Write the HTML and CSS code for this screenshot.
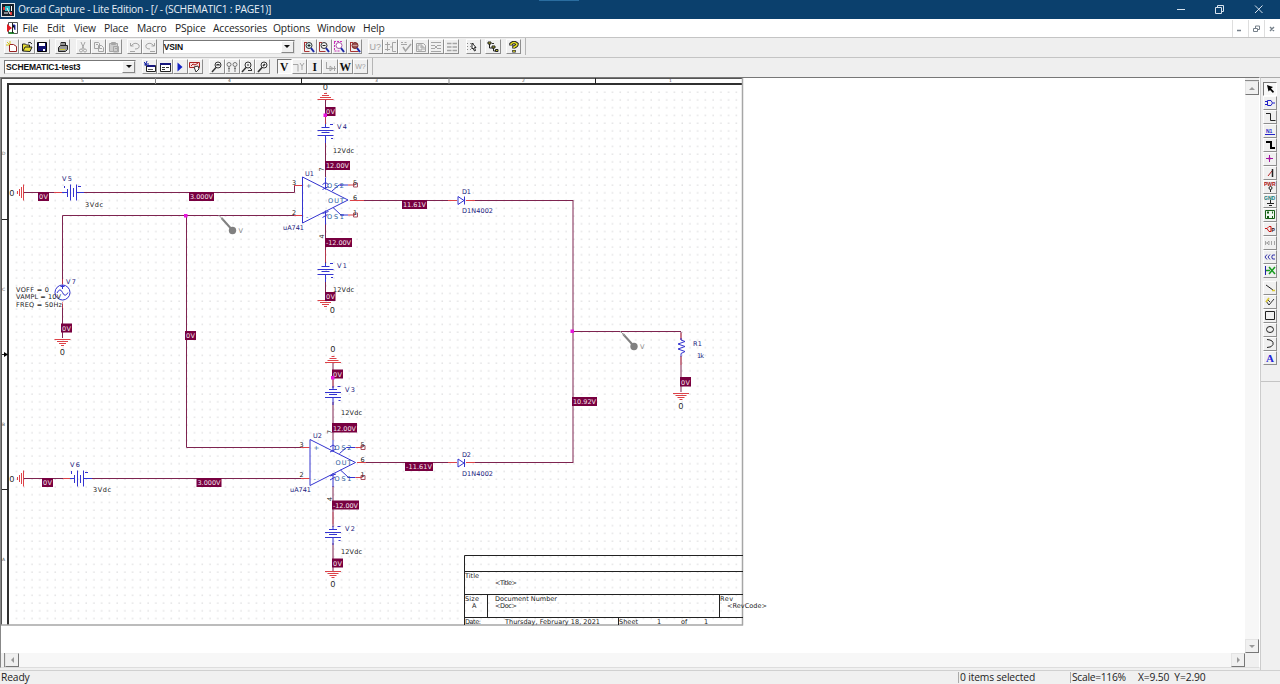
FILE: index.html
```html
<!DOCTYPE html>
<html lang="en">
<head>
<meta charset="utf-8">
<title>Orcad Capture - Lite Edition</title>
<link rel="stylesheet" href="styles.css">
</head>
<body>
<div class="app">
<header class="titlebar">
  <svg class="logo" width="14" height="14" viewBox="0 0 14 14"><path fill="#dfe5e8" d="M0 0h14v14H0z"/><path fill="#16202a" d="M1 1h12v12H1z"/><path fill="#29b9c4" d="M4 3h5v5H4z"/><path fill="#d33" d="M2 4h2v3H2zM9 9h2v3H9z"/><path stroke="#fff" fill="none" d="M3 10h4M10.500 3v5M6 5l3 6"/></svg>
  <span class="title-text">Orcad Capture - Lite Edition - [/ - (SCHEMATIC1 : PAGE1)]</span>
  <span class="title-accent"></span>
  <svg class="win-controls" width="120" height="19" viewBox="0 0 120 19"><path stroke="#d7e2ee" fill="none" d="M17 9.500h8M55.500 7.500h6v6h-6zM57.500 7v-1.500h6v6h-1.500M95 5.500l7.500 7.500M102.500 5.500l-7.500 7.500"/></svg>
</header>
<nav class="menubar">
  <svg class="doc-icon" width="12" height="14" viewBox="0 0 12 14"><path fill="#fff" stroke="#555" d="M2.500 1.500h9v11h-9z"/><path fill="#e31b23" d="M1 3l5 4-5 4z"/><path stroke="#2b36c9" d="M6 4h3v5"/><path stroke="#2c8b35" stroke-width="2" d="M3 12h5"/><path stroke="#222" d="M6.500 2v10"/></svg>
  <span class="m-file">File</span><span class="m-edit">Edit</span><span class="m-view">View</span><span class="m-place">Place</span><span class="m-macro">Macro</span><span class="m-pspice">PSpice</span><span class="m-acc">Accessories</span><span class="m-opt">Options</span><span class="m-win">Window</span><span class="m-help">Help</span>
  <svg class="mdi-controls" width="48" height="17" viewBox="0 0 48 17"><path stroke="#dedede" d="M.5 0v17M16.500 0v17M32.500 0v17"/><path stroke="#76808a" stroke-width="1.400" fill="none" d="M5 10.500h4M38 7l4 4M42 7l-4 4"/><path stroke="#76808a" fill="none" d="M21.500 8.500h4v3h-4zM23.500 8v-2h4v3.500h-2"/></svg>
</nav>

<div class="toolbar">
  <div class="group">
    <b class="btn"><svg viewBox="0 0 12 12"><path fill="#fff" stroke="#922" d="M3.500 3.500h4l3 2v5h-7z"/><path stroke="#d5c51a" d="M1 1l3 3M4 0v3M0 4h3"/></svg></b>
    <b class="btn"><svg viewBox="0 0 12 12"><path fill="#e8df35" stroke="#222" d="M1.500 10V3h3l1 1h3v2h2.500l-2 4.500z"/><path stroke="#222" fill="none" d="M2 10l2-4h5M7 2q2-2 4 1"/></svg></b>
    <b class="btn"><svg viewBox="0 0 12 12"><path fill="#121270" stroke="#000" d="M1.500 1.500h9v9h-9z"/><path fill="#fff" d="M3 2h6v3H3zM7 8h2v2H7z"/></svg></b>
  </div>
  <div class="group">
    <b class="btn"><svg viewBox="0 0 12 12"><path fill="#fff" stroke="#222" d="M4 5V1.500h4.500V5"/><path fill="#999" stroke="#222" d="M1.500 6.500l2-2h7v4l-2 2h-7z"/><path stroke="#cfca2f" d="M3 8.500h5"/><path stroke="#222" d="M5 3h3"/></svg></b>
  </div>
  <div class="group dim">
    <b class="btn"><svg viewBox="0 0 12 12"><path d="M4 1l3 7M8 1L5 8"/><circle cx="4" cy="9.500" r="1.500"/><circle cx="8" cy="9.500" r="1.500"/></svg></b>
    <b class="btn"><svg viewBox="0 0 12 12"><path d="M1.500 1.500h4l1 1v5h-5zM5.500 4.500h3l2 2v4h-5zM3 3.500h2M7 7.500h2"/></svg></b>
    <b class="btn"><svg viewBox="0 0 12 12"><path fill="#ccc" d="M1.500 2.500h8v8h-8z"/><path d="M3.500 1.500h4v2h-4zM5.500 5.500h5v5.500h-5zM7 7.500h2"/></svg></b>
  </div>
  <div class="group dim">
    <b class="btn"><svg viewBox="0 0 12 12"><path d="M1.500 2v3h3M2 5q4-5 8-1 1 4-4 4M1 10.500h5"/></svg></b>
    <b class="btn"><svg viewBox="0 0 12 12"><path d="M10.500 2v3h-3M10 5Q6 0 2 4q-1 4 4 4M6 10.500h5"/></svg></b>
  </div>
  <div class="combo part"><span>VSIN</span><i class="drop"></i></div>
  <div class="group zooms">
    <b class="btn"><svg viewBox="0 0 12 12"><path stroke="#a33" fill="none" d="M1.500 1v9.500h5M1 1.500h3"/><circle cx="6" cy="4.500" r="3" fill="#d8eef0" stroke="#333"/><path stroke="#222" d="M4.500 4.500h3M6 3v3"/><path stroke="#1a28a8" stroke-width="2" d="M8 7l3 4"/></svg></b>
    <b class="btn"><svg viewBox="0 0 12 12"><path stroke="#a33" fill="none" d="M1.500 1v9.500h6M1 1.500h3"/><circle cx="6" cy="4.500" r="3" fill="#eee" stroke="#333"/><path stroke="#222" d="M4.500 4.500h3"/><path stroke="#1a28a8" stroke-width="2" d="M8 7l3 4"/></svg></b>
    <b class="btn"><svg viewBox="0 0 12 12"><path stroke="#c3b" stroke-dasharray="2 1" fill="none" d="M1.500 1v9h6M1 .5h8"/><circle cx="6" cy="4.500" r="3" fill="#fff" stroke="#a5a"/><path stroke="#1a28a8" stroke-width="2" d="M8 7l3 4"/></svg></b>
    <b class="btn"><svg viewBox="0 0 12 12"><path stroke="#a33" fill="none" d="M1.500 1v9.500h8M1 1.500h3"/><circle cx="6" cy="4.500" r="3" fill="#c99" stroke="#722"/><path stroke="#611" d="M4 3h4M4 6h4"/><path stroke="#1a28a8" stroke-width="2" d="M8 7l3 4"/></svg></b>
  </div>
  <div class="group dim">
    <b class="btn"><em>U?</em></b>
    <b class="btn"><svg viewBox="0 0 12 12"><path d="M2.500 1v9M0 3.500h5M0 8.500h5M11 1.500H7.500v9H11M5 6h3"/></svg></b>
    <b class="btn"><svg viewBox="0 0 12 12"><path stroke-width="1.500" d="M3 6l2.500 4L11 3"/><path d="M1 1.500h2M4.500 1.500h2M1 3.500h6"/></svg></b>
    <b class="btn"><svg viewBox="0 0 12 12"><path d="M1.500 2.500h7l2 2v6h-9zM3 4v5h4V4zM5 6h4v3"/></svg></b>
    <b class="btn"><svg viewBox="0 0 12 12"><path d="M1 1.500h10M1 4.500h3M8 4.500h3M4 4l4 4M8 4L4 8M1 7.500h3M8 7.500h3M1 10.500h10"/></svg></b>
    <b class="btn"><svg viewBox="0 0 12 12"><path stroke-width="1.500" stroke-dasharray="4.500 1" d="M1 2.500h10M1 6h10M1 9.500h10"/></svg></b>
  </div>
  <div class="group snap"><b class="btn"><svg viewBox="0 0 12 12"><path stroke="#888" stroke-dasharray="1 2" d="M0 2.500h9M0 5.500h9M0 8.500h9"/><path fill="#fff" stroke="#222" d="M5 2l4 4.500H7.500l1 3-1 .5-1.500-3-1 1z"/></svg></b></div>
  <div class="group tree"><b class="btn"><svg viewBox="0 0 12 12"><path stroke="#222" fill="none" d="M2.500 2v5h4M6.500 7v3h3"/><path fill="#bcb92a" stroke="#222" d="M1 1h3v2H1zM5 5h3v2H5zM8.500 8.500h2.500v2H8.500z"/><path stroke="#333" d="M5 2.500h2"/></svg></b></div>
  <div class="group"><b class="btn"><svg viewBox="0 0 12 12"><path stroke="#222" stroke-width="3.500" fill="none" d="M3 4.500V3q3-3 6 0 0 2-3 3v1.500M6 9v2.500"/><path stroke="#e4de22" stroke-width="1.500" fill="none" d="M3 4V3q3-3 6 0 0 2-3 3v1M6 9.500v1.500"/></svg></b></div>
  <i class="bar-end"></i>
</div>

<div class="toolbar second">
  <div class="combo profile"><span>SCHEMATIC1-test3</span><i class="drop"></i></div>
  <div class="group">
    <b class="btn"><svg viewBox="0 0 12 12"><path fill="#fff" stroke="#222" d="M2.500 4.500h9v6h-9z"/><path stroke="#17177d" stroke-width="2" d="M3 5h8"/><path stroke="#1a28a8" d="M0 1l4 4M3 0L1 5M0 3h5"/><path stroke="#555" d="M4 8.500h5"/></svg></b>
    <b class="btn"><svg viewBox="0 0 12 12"><path fill="#fff" stroke="#222" d="M1.500 2.500h10v8h-10z"/><path stroke="#17177d" stroke-width="2" d="M1 3h11"/><path stroke="#333" d="M3 6.500h3M7 6.500h3M3 8.500h3"/></svg></b>
    <b class="btn"><svg viewBox="0 0 12 12"><path fill="#1422c5" d="M3.500 1.500l5 4.500-5 4.500z"/></svg></b>
    <b class="btn"><svg viewBox="0 0 12 12"><path fill="#f8dcdc" stroke="#a22" d="M.5 1.500h10v5H.5z"/><path stroke="#a22" fill="none" d="M2 5l2-2 2 1 3-2"/><path fill="#fff" stroke="#333" d="M5 6l4-1 1 3-3 3z"/></svg></b>
  </div>
  <div class="group">
    <b class="btn probe"><svg viewBox="0 0 12 12"><circle cx="7" cy="4" r="3"/><path stroke-width="1.500" d="M5 6.500L1 11"/><path d="M6 5V3l1 1 1-1v2"/></svg></b>
    <b class="btn probe"><svg viewBox="0 0 12 12"><g stroke="#777"><circle cx="3" cy="3.500" r="2"/><circle cx="9" cy="3.500" r="2"/><path d="M3 6v5M9 6v5M2 7.500h2M8 7.500h2"/></g></svg></b>
    <b class="btn probe"><svg viewBox="0 0 12 12"><circle cx="7" cy="4" r="3"/><path stroke-width="1.500" d="M5 6.500L1 11"/><path d="M6 4h2M7 9.500h4M9 7l2 2"/></svg></b>
    <b class="btn probe"><svg viewBox="0 0 12 12"><circle cx="7" cy="4" r="3"/><path stroke-width="1.700" d="M5 6.500L1 11M6 5l2-2"/></svg></b>
  </div>
  <div class="group">
    <b class="btn on"><strong>V</strong></b>
    <b class="btn dim"><svg viewBox="0 0 12 12"><path d="M0 3.500h5v7M7 2l2 3 2-3M9 5v4"/></svg></b>
    <b class="btn"><strong>I</strong></b>
    <b class="btn dim"><svg viewBox="0 0 12 12"><path d="M2.500 1v6M2 7.500h10M6 5v5l3-2.500zM10.500 5v5"/></svg></b>
    <b class="btn"><strong>W</strong></b>
    <b class="btn dim"><em class="small">W?</em></b>
  </div>
  <i class="bar-end"></i>
</div>

<main class="workspace">
<div class="mdi">
  <div class="view">
  <svg class="sheet" width="1244" height="575" viewBox="1 78 1244 575">
    <defs>
      <pattern id="grid" x="12.500" y="88.200" width="7.740" height="7.740" patternUnits="userSpaceOnUse"><rect x="3.500" y="3.500" width="1" height="1" fill="#bcbcc0"/></pattern>
      <g id="gnd" class="pin"><path d="M-8 .5H8M-5.500 2.500H5.500M-3.500 4.500H3.500M-1.500 6.500H1.500"/></g>
      <g id="cell" class="part-line"><path d="M0-6v3M-4-2.500H4M-8 .5H8M-4 2.500H4M-8 5.500H8M0 6v7"/><path d="M4.500-5.500h3M5.500 8.500h2"/></g>
      <g id="opamp">
        <path class="part-line" d="M.5.500L46 23.500.5 46.500zM23.500 1v12M23.500 34v14M40 8.500h-3l-7 6M31 31l8 7.500h3"/>
        <path class="part-line" d="M20.500 8l3-2 3 2M20.500 13l6-3M20.500 37l6-2M20.500 41l5-3"/>
        <path class="part-line" d="M38 8.500h8M38 38.500h8"/>
        <path class="pin" d="M46 8.500h7M46 38.500h7"/>
        <path class="nc" d="M51.500 6.500h4v4h-4zM51.500 36.500h4v4h-4z"/>
        <g class="pinname"><text x="25" y="11" textLength="17">OS2</text><text x="26" y="26" textLength="16">OUT</text><text x="25" y="42" textLength="17">OS1</text><text x="4" y="11">+</text><text x="4" y="42">-</text></g>
        <g class="lbl"><text x="51" y="8">5</text><text x="51" y="23">6</text><text x="51" y="38">1</text><text x="-10" y="8">3</text><text x="-10" y="38">2</text><text transform="translate(22 -5) rotate(-90)">7</text><text transform="translate(22 62) rotate(-90)">4</text></g>
      </g>
      <g id="probe"><path stroke="#808080" stroke-width="2" d="M2 2l9 10"/><path stroke="#999" d="M-1-1l5 5"/><circle cx="13" cy="14.500" r="3.700" fill="#808080"/><text x="19" y="17" class="probe-v">V</text></g>
      <g id="diode" class="part-line"><path class="diode-body" d="M-3.500-4v8l6-4z"/><path d="M3-4v8"/></g>
    </defs>
    <rect x="12" y="88" width="730" height="536" fill="url(#grid)"/>
    <g class="frame">
      <path stroke="#555" d="M1 78.500h742M1.500 78v547"/>
      <path stroke-width="2" stroke="#303030" d="M7 84h736M8 84v541"/>
      <path stroke="#a6a6a6" stroke-width="1.500" d="M742.500 78v547.500M1 625h742"/>
      <path d="M301.500 78v6M595.500 78v6M2 219.500h6M2 354.500h5M2 489.500h6"/>
      <path stroke="#888" d="M155.500 78v6M449 78v6"/>
      <path stroke="none" fill="#000" d="M4 352l4 2.500-4 2.500z"/>
    </g>
    <g class="zone"><text x="81" y="82">5</text><text x="228" y="82">4</text><text x="375" y="82">3</text><text x="522" y="82">2</text><text x="669" y="82">1</text><text x="2" y="155">D</text><text x="2" y="291">C</text><text x="2" y="426">B</text><text x="2" y="561">A</text></g>

    <g class="wire">
      <path d="M24 192.500h38M84 192.500h210.500v-7.500M62.500 284v-68.500h233M186.500 216v231.500h115M325.500 100v25M325.500 140v37M325.500 223v42M325.500 280v20M356 200.500h98M468 200.500h105M573 200v263M573 331.500h108M681 332v8M681 356v36M62.500 304v34"/>
      <path d="M24 478.500h46M91 478.500h212M364 462.500h90M468 462.500h105M333 363v25M333 402v38M333 486v41M333 543v28"/>
    </g>
    <g class="pin">
      <path d="M54 192.500h10M294 185.500h8.500M294 215.500h8.500M301 447.500h8.500M301 478.500h8.500M350 200.500h14M357 462.500h9M448 200.500h9M466 200.500h9M448 462.500h9M466 462.500h9M63 478.500h9"/>
      <path opacity=".6" d="M325.500 115v10M325.500 250v12M333 378v9M333 512v12M681 333v6M681 356v9M62.500 279v6M62.500 302v6"/>
    </g>
    <use href="#gnd" transform="translate(325.500 100) scale(1 -1)"/>
    <use href="#gnd" x="325.500" y="300"/>
    <use href="#gnd" transform="translate(333 363) scale(1 -1)"/>
    <use href="#gnd" x="333" y="571"/>
    <use href="#gnd" x="62.500" y="339"/>
    <use href="#gnd" x="681" y="393"/>
    <use href="#gnd" transform="translate(24 192.500) rotate(90)"/>
    <use href="#gnd" transform="translate(24 478.500) rotate(90)"/>
    <use href="#cell" x="325.500" y="130"/>
    <use href="#cell" x="325.500" y="269"/>
    <use href="#cell" x="333" y="392"/>
    <use href="#cell" x="333" y="532"/>
    <g class="part-line">
      <path d="M62 192.500h5M67.500 189v8M70.500 184.500v16M73.500 188v9M76.500 184.500v16M77 192.500h7M64.500 186v2M78 186.500h3"/>
      <path d="M70 478.500h4M74.500 475v8M77.500 470.500v16M80.500 475v8M83.500 470.500v16M84 478.500h8M71.500 471v3M85 472.500h3"/>
      <circle cx="62.500" cy="292.500" r="7.500"/><path d="M57 293q3-6 5.500-.5t5.500 0M62.500 285v4M60.500 286.500h4"/>
      <path d="M681 338v2l4 1.500-7 2.500 7 2.500-7 2.500 7 2.500-4 2v3"/>
    </g>
    <use href="#opamp" x="302" y="176.500"/>
    <use href="#opamp" x="309.500" y="439"/>
    <use href="#diode" x="461.500" y="200.500"/>
    <use href="#diode" x="461.500" y="463"/>
    <use href="#probe" x="219.500" y="216"/>
    <use href="#probe" x="621" y="332"/>

    <g class="bias">
      <path d="M38 192h11v9H38zM189 192h25v9h-25zM402 200h25v9h-25zM325 107h10.500v9H325zM325 161h25v9h-25zM325 238h27v9h-27zM325 292h10.500v9H325zM61 323.500h11v9H61zM185 331h11v9h-11zM42 478h11v9H42zM196.500 478h25v9h-25zM332 369.500h11v9h-11zM332 423h25v9.500h-25zM332 500.500h27v9h-27zM332 558.500h11v9h-11zM405 462h28v9h-28zM572 397h25v9h-25zM680 377h11v9.500h-11z"/>
      <text x="39" y="199" textLength="9">0V</text><text x="190" y="199" textLength="23">3.000V</text><text x="403" y="207" textLength="23">11.61V</text><text x="326" y="114" textLength="9">0V</text><text x="326" y="168" textLength="23">12.00V</text><text x="326" y="245" textLength="25">-12.00V</text><text x="326" y="299" textLength="9">0V</text><text x="62" y="330.500" textLength="9">0V</text><text x="186" y="338" textLength="9">0V</text><text x="43" y="485" textLength="9">0V</text><text x="197.500" y="485" textLength="23">3.000V</text><text x="333" y="376.500" textLength="9">0V</text><text x="333" y="430.500" textLength="23">12.00V</text><text x="333" y="507.500" textLength="25">-12.00V</text><text x="333" y="565.500" textLength="9">0V</text><text x="406" y="469" textLength="26">-11.61V</text><text x="573" y="404" textLength="23">10.92V</text><text x="681" y="384.500" textLength="9">0V</text>
    </g>
    <path fill="#e815dd" d="M184 214h3.500v3.500H184zM323.500 113.500h3.500v3.500h-3.500zM570.500 329.500h3.500v3.500h-3.500zM331 376h3.500v3.500H331z"/>
    <g class="ref">
      <text x="62" y="181" textLength="10">V5</text><text x="70" y="467" textLength="10">V6</text><text x="66" y="284" textLength="10">V7</text><text x="337" y="129" textLength="10">V4</text><text x="337" y="268" textLength="10">V1</text><text x="345" y="392" textLength="10">V3</text><text x="345" y="531" textLength="10">V2</text><text x="305" y="176" textLength="9">U1</text><text x="313" y="438" textLength="9">U2</text><text x="283" y="230" textLength="21">uA741</text><text x="290" y="492" textLength="21">uA741</text><text x="462" y="194" textLength="9">D1</text><text x="462" y="213" textLength="31">D1N4002</text><text x="462" y="457" textLength="9">D2</text><text x="462" y="476" textLength="31">D1N4002</text><text x="693" y="346" textLength="9">R1</text><text x="697" y="358" textLength="7">1k</text>
    </g>
    <g class="lbl">
      <text x="85" y="207" textLength="18">3Vdc</text><text x="93" y="492" textLength="18">3Vdc</text><text x="333" y="153" textLength="21">12Vdc</text><text x="333" y="292" textLength="21">12Vdc</text><text x="341" y="415" textLength="21">12Vdc</text><text x="341" y="554" textLength="21">12Vdc</text>
      <text x="16" y="292" textLength="33">VOFF = 0</text><text x="16" y="299" textLength="45">VAMPL = 10V</text><text x="16" y="307" textLength="46">FREQ = 50Hz</text>
    </g>
    <svg x="300" y="84" width="60" height="20" viewBox="300 84 60 20"><text class="zero" x="323" y="90">0</text></svg>
    <g class="zero"><text x="9.500" y="196">0</text><text x="9.500" y="482">0</text><text x="60" y="355">0</text><text x="330" y="313">0</text><text x="330.500" y="352">0</text><text x="330.500" y="587">0</text><text x="678.500" y="409">0</text></g>

    <g class="frame"><path d="M743 555.500H464.500V625M464 571.500h279M464 594.500h279M464 617.500h279M487.500 595v22M719.500 595v22M618.500 618v7"/></g>
    <g class="lbl">
      <text x="465" y="578" textLength="14">Title</text><text x="495" y="585" textLength="22">&lt;Title&gt;</text>
      <text x="465" y="601" textLength="14">Size</text><text x="472" y="608">A</text><text x="495" y="601" textLength="62">Document Number</text><text x="495" y="608" textLength="22">&lt;Doc&gt;</text>
      <text x="720" y="601" textLength="13">Rev</text><text x="727" y="608" textLength="40">&lt;RevCode&gt;</text>
      <text x="465" y="624" textLength="16">Date:</text><text x="505" y="624" textLength="95">Thursday, February 18, 2021</text><text x="619" y="624" textLength="19">Sheet</text><text x="657" y="624">1</text><text x="681" y="624">of</text><text x="704" y="624">1</text>
    </g>
  </svg>
  <div class="vscroll"><i class="split"></i><b class="arrow up"></b><span></span><b class="arrow down"></b></div>
  </div>
  <div class="hscroll"><i class="split"></i><b class="arrow left"></b><span></span><b class="arrow right"></b><i class="corner"></i></div>
</div>

<aside class="palette">
  <b class="btn on"><svg viewBox="0 0 12 12"><path fill="#000" d="M3 2l6 2-2 1.500 3 3L9 10 6 7 4.500 8.500z"/></svg></b>
  <b class="btn"><svg viewBox="0 0 12 12"><path stroke="#2222c8" fill="none" d="M3.500 3.500H7q3 2.500 0 5H3.500zM1 4.500h2M1 7.500h2M9 6h2"/></svg></b>
  <b class="btn"><svg viewBox="0 0 12 12"><path stroke="#222" fill="none" d="M2 2.500h4.500v7h5"/></svg></b>
  <b class="btn"><svg viewBox="0 0 12 12"><text x="2" y="8" class="tiny blue">N1</text><path stroke="#2222c8" d="M1 9.500h10"/></svg></b>
  <b class="btn"><svg viewBox="0 0 12 12"><path stroke="#000" stroke-width="2" fill="none" d="M2 3h5v6h4"/></svg></b>
  <b class="btn"><svg viewBox="0 0 12 12"><path stroke="#a216a2" d="M5.500 2v7M2 5.500h7"/><circle cx="5.500" cy="5.500" r="1.200" fill="#a216a2"/></svg></b>
  <b class="btn"><svg viewBox="0 0 12 12"><path stroke="#b22" d="M4 9l4-5"/><path stroke="#222" stroke-width="1.500" d="M8.500 2v8"/></svg></b>
  <b class="btn"><svg viewBox="0 0 12 12"><text x="0" y="4.500" class="tiny red">PWR</text><circle cx="6.500" cy="7" r="1.500" fill="none" stroke="#222"/><path stroke="#222" d="M6.500 8.500V11"/></svg></b>
  <b class="btn"><svg viewBox="0 0 12 12"><text x="0" y="4.500" class="tiny teal">GND</text><path stroke="#222" d="M6.500 5v3M3 8.500h7M5 10.500h3"/></svg></b>
  <b class="btn"><svg viewBox="0 0 12 12"><path fill="#eef7ee" stroke="#176117" d="M1.500 1.500h9v8h-9z"/><path stroke="#176117" stroke-width="2" stroke-dasharray="2 3" d="M3 3.500h6M3 8h6"/></svg></b>
  <b class="btn"><svg viewBox="0 0 12 12"><path stroke="#c11" fill="none" d="M1 5.500h2l2-2h2v5H5L3 5.500"/><text x="7.500" y="8.500" class="tiny dark">P</text></svg></b>
  <b class="btn dim"><svg viewBox="0 0 12 12"><path d="M1.500 4v4M1 6h2l2-2v4L3 6M7.500 4v4M10.500 4v4"/></svg></b>
  <b class="btn"><svg viewBox="0 0 12 12"><path stroke="#33a" fill="none" d="M3 3.500L1 6l2 2.500M6 3.500L4 6l2 2.500M11 4H8.500Q7 6 8.500 8H11"/></svg></b>
  <b class="btn"><svg viewBox="0 0 12 12"><path stroke="#22a" d="M1.500 1v9"/><path stroke="#199c22" stroke-width="1.500" d="M2 5.500h4M5 2l6 7M11 2L5 9"/></svg></b>
  <i class="gap"></i>
  <b class="btn"><svg viewBox="0 0 12 12"><path stroke="#222" d="M2 3l7 5"/><path stroke="#d9c72e" stroke-width="1.500" d="M8 8.500h3"/></svg></b>
  <b class="btn"><svg viewBox="0 0 12 12"><path stroke="#333" fill="none" d="M2 5l3 4 5-6M4 4l2 2"/><path stroke="#d9c72e" stroke-width="1.500" d="M2 6l3-4"/></svg></b>
  <b class="btn"><svg viewBox="0 0 12 12"><path stroke="#222" fill="none" d="M1.500 1.500h9v8h-9z"/></svg></b>
  <b class="btn"><svg viewBox="0 0 12 12"><ellipse cx="6" cy="5.500" rx="3.500" ry="3" stroke="#222" fill="none"/></svg></b>
  <b class="btn"><svg viewBox="0 0 12 12"><path stroke="#222" fill="none" d="M3 1.500q7 .5 6 5-1 3-6 3"/></svg></b>
  <b class="btn"><svg viewBox="0 0 12 12"><text x="2" y="10" class="letter">A</text></svg></b>
  <i class="palette-end"></i>
</aside>
</main>
<footer class="status"><span class="ready">Ready</span><span class="items">0 items selected</span><span class="scale">Scale=116%</span><span class="coords">X=9.50&nbsp; Y=2.90</span></footer>
</div>
</body>
</html>
```
FILE: styles.css
```css
* { box-sizing: border-box; }
body { margin: 0; overflow: hidden; background: #f0f0f0; }
.app { width: 1280px; height: 684px; display: flex; flex-direction: column; font: 10.3px/1 "Open Sans", "Noto Sans", sans-serif; color: #222; }

.titlebar { height: 19px; flex: none; display: flex; align-items: center; background: #0b406d; color: #e8eff6; }
.logo { margin: 0 3px 0 1px; }
.title-text { width: 521px; font-size: 10.300px; letter-spacing: -.27px; white-space: nowrap; }
.title-accent { width: 40px; height: 1px; align-self: flex-start; background: #2a6da0; }
.win-controls { margin-left: auto; }

.menubar { height: 18px; flex: none; display: flex; align-items: center; background: #fff; letter-spacing: -.15px; }
.menubar span { white-space: nowrap; }
.doc-icon { margin: 0 4.500px 0 6px; }
.m-file { width: 24.500px; } .m-edit { width: 27px; } .m-view { width: 30px; } .m-place { width: 33px; } .m-macro { width: 38px; }
.m-pspice { width: 38px; } .m-acc { width: 60px; } .m-opt { width: 44px; } .m-win { width: 46px; } .m-help { width: 30px; }
.mdi-controls { margin-left: auto; }

.toolbar { height: 20px; flex: none; display: flex; align-items: center; padding: 0 0 2px 4px; border-top: 1px solid #c4c4c4; background: #efefef; }
.group { display: flex; flex: none; margin-right: 5.400px; }
.second .group { margin-right: 6.300px; }
.group.zooms { margin-left: .5px; }
.group.snap { margin: 0 4.500px 0 1px; }
.btn { display: flex; align-items: center; justify-content: center; width: 15.250px; height: 15px; border: 1px solid; border-color: #fdfdfd #8e8e8e #8e8e8e #fdfdfd; background: #f0f0f0; }
.btn.on { border-color: #777 #fff #fff #777; background: #f8f8f8; }
.btn svg { width: 12px; height: 12px; flex: none; }
.dim svg { fill: none; stroke: #a5a5a5; }
.btn em { font: 9px "Liberation Sans", sans-serif; color: #a0a0a0; }
.btn em.small { font-size: 7px; }
.btn strong { font: bold 11.500px "Liberation Serif", serif; color: #111; }
.btn.probe svg { fill: none; stroke: #333; }
.bar-end { width: 1px; height: 17px; background: #b5b5b5; margin-left: -2px; }
.combo { display: flex; flex: none; align-items: center; height: 14px; border: 1px solid; border-color: #777 #ddd #ddd #777; background: #fff; font: bold 8.500px "Liberation Sans", sans-serif; color: #111; }
.combo span { flex: 1; padding-left: 1px; letter-spacing: -.18px; }
.combo.part { width: 132px; margin-right: 6px; }
.combo.part span { padding-left: 0; }
.combo.profile { width: 132px; margin-right: 6px; }
.drop { display: flex; width: 13px; height: 12px; align-items: center; justify-content: center; border: 1px solid; border-color: #fff #888 #888 #fff; background: #f0f0f0; }
.drop::before { content: ""; border: 3px solid transparent; border-top-color: #111; border-bottom: 0; }

.workspace { flex: 1; min-height: 0; display: flex; }
.mdi { width: 1260px; height: 591px; display: flex; flex-direction: column; border: 1px solid; border-color: #777 #fff #ddd #888; }
.view { display: flex; height: 575px; background: #fff; }
.sheet { display: block; flex: none; background: #fff; }
.vscroll { width: 14px; display: flex; flex-direction: column; background: #f7f7f7; }
.vscroll span, .hscroll span { flex: 1; }
.hscroll { display: flex; height: 14px; background: #f7f7f7; }
.vscroll .split { height: 3px; border-bottom: 1px solid #888; background: #f0f0f0; }
.hscroll .split { width: 4px; border-right: 1px solid #888; background: #f0f0f0; }
.hscroll .corner { width: 14px; background: #f0f0f0; }
.arrow { width: 14px; height: 14px; display: flex; align-items: center; justify-content: center; border: 1px solid; border-color: #e4e4e4 #777 #777 #e4e4e4; background: #f0f0f0; }
.arrow::before { content: ""; border: 3px solid transparent; }
.up::before { border-bottom-color: #999; border-top: 0; }
.down::before { border-top-color: #999; border-bottom: 0; }
.left::before { border-right-color: #999; border-left: 0; }
.right::before { border-left-color: #999; border-right: 0; }

.palette { width: 20px; display: flex; flex-direction: column; padding: 4px 0 0 2px; border-top: 1px solid #aaa; border-left: 1px solid #ccc; background: #f0f0f0; }
.palette .btn { width: 14px; height: 14px; flex: none; }
.gap { height: 3px; }
.palette-end { height: 1px; margin: 16px 0 0 -2px; background: #c4c4c4; }
.tiny { font: bold 5px "Liberation Sans", sans-serif; }
.blue { fill: #2222c8; } .red { fill: #a11; } .teal { fill: #177; } .dark { fill: #311; }
.letter { font: bold 11px "Liberation Serif", serif; fill: #2222d8; }

.status { height: 14px; flex: none; display: flex; align-items: center; border-top: 1px solid #d0d0d0; background: #f0f0f0; font-size: 10.300px; letter-spacing: -.15px; }
.status span { white-space: nowrap; }
.ready { width: 958px; padding-left: 1px; }
.items { width: 112px; padding-left: 1px; border-left: 1px solid #aaa; }
.scale { width: 68px; padding-left: 1px; border-left: 1px solid #aaa; letter-spacing: -.3px; }

.sheet text { font-family: "DejaVu Sans", Verdana, sans-serif; font-size: 6.500px; }
.lbl text { fill: #222; }
.ref text { fill: #20207c; }
.bias path { fill: #780040; }
.bias text { fill: #f4e4ec; }
.pinname text { fill: #2a5c9c; }
.sheet .zero, .sheet .zero text { font-family: "Liberation Sans", Arial, sans-serif; font-size: 8.500px; fill: #222; }
.sheet .zone text { font-size: 4.500px; fill: #555; }
.sheet .probe-v { fill: #888; }
.wire { fill: none; stroke: #7e2450; }
.pin { fill: none; stroke: #dc4248; }
.nc { fill: none; stroke: #a85060; }
.part-line { fill: none; stroke: #3434d0; }
.diode-body { fill: #fff; }
.frame { fill: none; stroke: #222; }
```
